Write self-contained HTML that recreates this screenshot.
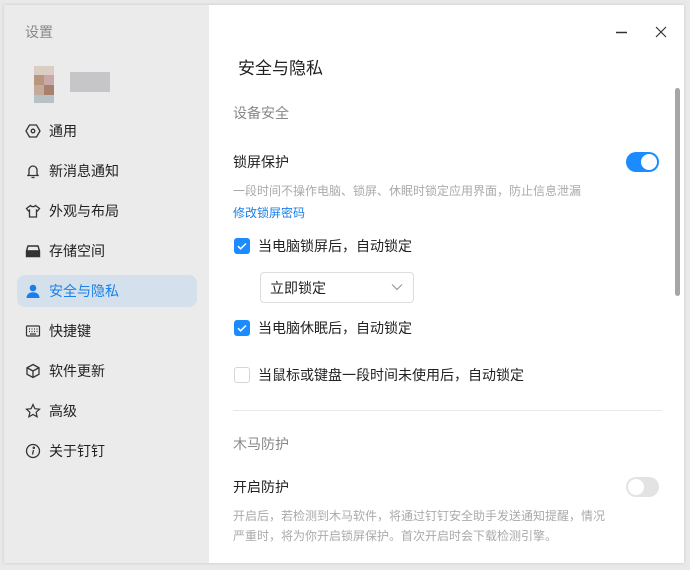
<!DOCTYPE html>
<html><head><meta charset="utf-8"><style>
*{margin:0;padding:0;box-sizing:border-box}
body{width:690px;height:570px;background:#e9e9e9;font-family:"Liberation Sans","Noto Sans CJK SC",sans-serif;position:relative;overflow:hidden}
.win{position:absolute;left:4px;top:5px;width:680px;height:558px;background:#fff;overflow:hidden;box-shadow:0 0 3px rgba(0,0,0,.15)}
.side{position:absolute;left:0;top:0;width:205px;height:558px;background:#ebebeb}
.t{position:absolute;font-size:14px;color:#222;white-space:nowrap;line-height:20px}
.g{color:#888}
.item{position:absolute;left:13px;width:180px;height:32px;border-radius:8px}
.item .ic{position:absolute;left:8px;top:8px;width:16px;height:16px}
.item span{position:absolute;left:32px;top:6px;font-size:14px;color:#222;line-height:20px}
.cb{position:absolute;width:16px;height:16px;border-radius:3px;background:#1a8cff}
.cb.off{background:#fff;border:1px solid #d6d6d6}
</style></head><body>
<div class="win">
<div class="side">
 <div class="t g" style="left:21px;top:17px">设置</div>
 <div style="position:absolute;left:24px;top:57px;width:30px;height:40px">
  <div style="position:absolute;left:6px;top:4px;width:20px;height:9px;background:#d9cdc4"></div>
  <div style="position:absolute;left:6px;top:13px;width:10px;height:10px;background:#b8987c"></div>
  <div style="position:absolute;left:16px;top:13px;width:10px;height:10px;background:#c9a8a8"></div>
  <div style="position:absolute;left:6px;top:23px;width:10px;height:10px;background:#c4aa98"></div>
  <div style="position:absolute;left:16px;top:23px;width:10px;height:10px;background:#a8806e"></div>
  <div style="position:absolute;left:6px;top:33px;width:20px;height:8px;background:#b8c2c4"></div>
 </div>
 <div style="position:absolute;left:66px;top:67px;width:40px;height:20px;background:#c6c6c8"></div>
 <div class="item" style="top:110px"><svg class="ic" viewBox="0 0 16 16" fill="none" stroke="#333" stroke-width="1.3"><path d="M4.5 2h7l3.5 6-3.5 6h-7L1 8z"/><circle cx="8" cy="8" r="1.8"/></svg><span>通用</span></div>
 <div class="item" style="top:150px"><svg class="ic" viewBox="0 0 16 16" fill="none" stroke="#333" stroke-width="1.3"><path d="M4 11V7a4 4 0 018 0v4l1 1.5H3z"/><path d="M6.5 14.5h3"/></svg><span>新消息通知</span></div>
 <div class="item" style="top:190px"><svg class="ic" viewBox="0 0 16 16" fill="none" stroke="#333" stroke-width="1.3"><path d="M5.5 2.5L1.5 5.5l2 2.5 1-.8V14h7V7.2l1 .8 2-2.5-4-3C10 4 6 4 5.5 2.5z"/></svg><span>外观与布局</span></div>
 <div class="item" style="top:230px"><svg class="ic" viewBox="0 0 16 16" fill="none" stroke="#333" stroke-width="1.4"><path d="M3 3h10l1.5 5v5.5h-13V8z"/><path d="M1.5 8h13" /><rect x="2" y="8" width="12" height="5" fill="#333"/></svg><span>存储空间</span></div>
 <div class="item" style="top:270px;background:#d4e1ec"><svg class="ic" viewBox="0 0 16 16" fill="#1a7fe8"><circle cx="8" cy="5" r="3.3"/><path d="M1.5 15c0-4 3-5.8 6.5-5.8S14.5 11 14.5 15z"/></svg><span style="color:#1a7fe8">安全与隐私</span></div>
 <div class="item" style="top:310px"><svg class="ic" viewBox="0 0 16 16" fill="none" stroke="#333" stroke-width="1.2"><rect x="1.5" y="3" width="13" height="10" rx="1"/><path d="M4 6h1M6.5 6h1M9 6h1M11.5 6h1M4 8.5h1M6.5 8.5h1M9 8.5h1M11.5 8.5h1M5 11h6"/></svg><span>快捷键</span></div>
 <div class="item" style="top:350px"><svg class="ic" viewBox="0 0 16 16" fill="none" stroke="#333" stroke-width="1.3"><path d="M8 1.5l6 3.3v6.4l-6 3.3-6-3.3V4.8z"/><path d="M2.5 5L8 8l5.5-3M8 8v6"/></svg><span>软件更新</span></div>
 <div class="item" style="top:390px"><svg class="ic" viewBox="0 0 16 16" fill="none" stroke="#333" stroke-width="1.2"><path d="M8 1.5l1.9 4.2 4.6.5-3.4 3.1 1 4.5L8 11.5l-4.1 2.3 1-4.5-3.4-3.1 4.6-.5z"/></svg><span>高级</span></div>
 <div class="item" style="top:430px"><svg class="ic" viewBox="0 0 16 16" fill="none" stroke="#333" stroke-width="1.3"><circle cx="8" cy="8" r="6.5"/><path d="M8.5 7l-1 4.5" /><circle cx="8.8" cy="4.8" r=".6" fill="#333"/></svg><span>关于钉钉</span></div>
</div>
<svg style="position:absolute;left:612px;top:21px" width="12" height="12"><path d="M0 6.5h11" stroke="#333" stroke-width="1.5"/></svg>
<svg style="position:absolute;left:651px;top:21px" width="12" height="12"><path d="M1 1l10 10M11 1L1 11" stroke="#333" stroke-width="1.2"/></svg>
<div class="t" style="left:234px;top:52px;font-size:17px;line-height:24px">安全与隐私</div>
<div style="position:absolute;left:671px;top:83px;width:5px;height:208px;border-radius:3px;background:#a6a6a6"></div>
<div class="t g" style="left:229px;top:98px">设备安全</div>
<div class="t" style="left:229px;top:147px">锁屏保护</div>
<div style="position:absolute;left:622px;top:147px;width:33px;height:20px;border-radius:10px;background:#1a8cff"><div style="position:absolute;right:2px;top:2px;width:16px;height:16px;border-radius:50%;background:#fff"></div></div>
<div class="t" style="left:229px;top:176px;font-size:12px;color:#aaa">一段时间不操作电脑、锁屏、休眠时锁定应用界面，防止信息泄漏</div>
<div class="t" style="left:229px;top:198px;font-size:12px;color:#1a7fe8">修改锁屏密码</div>
<div class="cb" style="left:230px;top:233px"><svg width="16" height="16"><path d="M4 8.2l2.6 2.6L12 5.5" stroke="#fff" stroke-width="1.5" fill="none"/></svg></div>
<div class="t" style="left:254px;top:231px">当电脑锁屏后，自动锁定</div>
<div style="position:absolute;left:256px;top:267px;width:154px;height:31px;border:1px solid #ddd;border-radius:4px"><span class="t" style="left:9px;top:5px">立即锁定</span><svg style="position:absolute;right:10px;top:10px" width="12" height="8"><path d="M1 1.5l5 5 5-5" stroke="#999" stroke-width="1.2" fill="none"/></svg></div>
<div class="cb" style="left:230px;top:315px"><svg width="16" height="16"><path d="M4 8.2l2.6 2.6L12 5.5" stroke="#fff" stroke-width="1.5" fill="none"/></svg></div>
<div class="t" style="left:254px;top:313px">当电脑休眠后，自动锁定</div>
<div class="cb off" style="left:230px;top:362px"></div>
<div class="t" style="left:254px;top:360px">当鼠标或键盘一段时间未使用后，自动锁定</div>
<div style="position:absolute;left:229px;top:405px;width:429px;height:1px;background:#e8e8e8"></div>
<div class="t g" style="left:229px;top:429px">木马防护</div>
<div class="t" style="left:229px;top:472px">开启防护</div>
<div style="position:absolute;left:622px;top:472px;width:33px;height:20px;border-radius:10px;background:#e3e3e3"><div style="position:absolute;left:2px;top:2px;width:16px;height:16px;border-radius:50%;background:#fff"></div></div>
<div class="t" style="left:229px;top:501px;font-size:12px;color:#aaa;line-height:20px;white-space:normal;width:380px">开启后，若检测到木马软件，将通过钉钉安全助手发送通知提醒，情况严重时，将为你开启锁屏保护。首次开启时会下载检测引擎。</div>
</div>
</body></html>
